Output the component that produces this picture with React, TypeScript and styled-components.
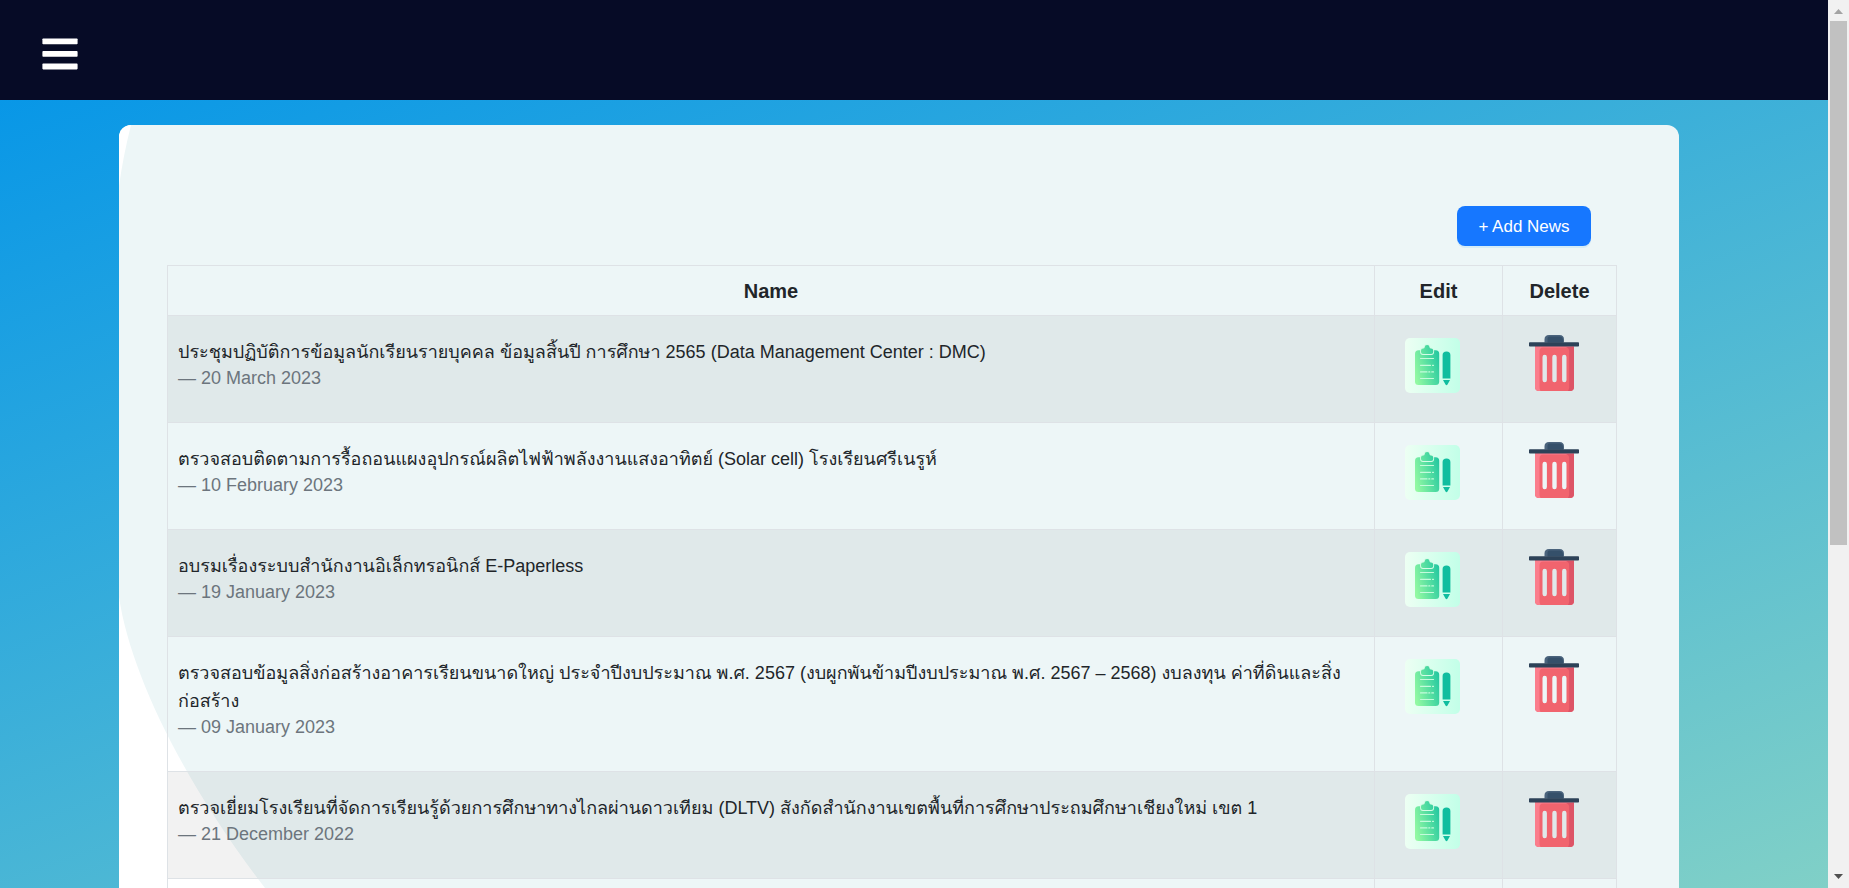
import React from "react";
import styled, { createGlobalStyle } from "styled-components";

const Global = createGlobalStyle`
  *, *::before, *::after { box-sizing: border-box; }
  html, body { margin: 0; height: 100%; }
  #root { height: 100%; }
  body {
    overflow: hidden;
    font-family: "Liberation Sans", Arial, "Loma", "Garuda", sans-serif;
    font-size: 18px;
    line-height: 28px;
    color: #212529;
  }
`;

const Screen = styled.div`
  display: grid;
  grid-template-columns: minmax(0, 1fr) 21px;
  height: 100vh;
`;

const Page = styled.div`
  height: 100vh;
  overflow: hidden;
  display: flex;
  flex-direction: column;
  background: linear-gradient(160deg, #0093e9 0%, #80d0c7 100%);
`;

const Navbar = styled.header`
  flex: none;
  display: flex;
  align-items: center;
  height: 100px;
  padding: 8px 42px 0;
  background: #060b26;
`;

const MenuButton = styled.button`
  display: flex;
  padding: 0;
  border: 0;
  background: none;
  color: #fff;
  cursor: pointer;
`;

const Card = styled.main`
  position: relative;
  flex: none;
  margin: 25px 149px 0 119px;
  padding: 81px 62px 48px 48px;
  border-radius: 12px;
  overflow: hidden;
  background: #edf6f7;
`;

const Backdrop = styled.svg`
  position: absolute;
  top: 0;
  left: 0;
`;

const Content = styled.div`
  position: relative;
`;

const Toolbar = styled.div`
  display: flex;
  justify-content: flex-end;
  padding: 0 26px 19px 0;
`;

const AddButton = styled.button`
  height: 40px;
  width: 134px;
  padding: 2px 0 0;
  border: 0;
  border-radius: 8px;
  background: #1677ff;
  box-shadow: 0 2px 0 rgba(5, 145, 255, 0.1);
  color: #fff;
  font: inherit;
  font-size: 17px;
  cursor: pointer;
`;

const NewsTable = styled.table`
  width: 100%;
  border-collapse: collapse;
  table-layout: fixed;
`;

const NameCol = styled.col``;
const EditCol = styled.col`
  width: 128px;
`;
const DeleteCol = styled.col`
  width: 114px;
`;

const HeadCell = styled.th`
  height: 50px;
  padding: 0;
  border: 1px solid #dee2e6;
  font-size: 20px;
  font-weight: 700;
  text-align: center;
`;

const Row = styled.tr`
  &:nth-child(odd) {
    background: rgba(0, 0, 0, 0.05);
  }
`;

const Cell = styled.td`
  height: 107px;
  padding: 22px 10px 32px;
  border: 1px solid #dee2e6;
  vertical-align: top;
`;

const EditCell = styled(Cell)`
  padding: 22px 0 0 30px;
`;

const DeleteCell = styled(Cell)`
  padding: 19px 0 0 26px;
`;

const Title = styled.div`
  line-height: 28px;
`;

const DateLine = styled.div`
  line-height: 24px;
  color: #6c757d;
`;

const IconButton = styled.button`
  display: block;
  padding: 0;
  border: 0;
  background: none;
  cursor: pointer;

  svg {
    display: block;
  }
`;

const Scrollbar = styled.div`
  display: flex;
  flex-direction: column;
  align-items: center;
  background: #f1f1f1;
`;

const Arrow = styled.svg`
  flex: none;
  display: block;
`;

const Thumb = styled.div`
  width: 17px;
  height: 59%;
  margin-bottom: auto;
  background: #c1c1c1;
`;

const MenuIcon = () => (
  <svg width="36" height="32" viewBox="0 0 36 32" fill="currentColor" aria-hidden="true">
    <rect x="0.4" y="0.4" width="35.2" height="5.8" rx="0.8" />
    <rect x="0.4" y="13.1" width="35.2" height="5.6" rx="0.8" />
    <rect x="0.4" y="25.6" width="35.2" height="5.8" rx="0.8" />
  </svg>
);

const EditIcon = ({ id }: { id: string }) => (
  <svg width="55" height="55" viewBox="0 0 55 55" aria-hidden="true">
    <defs>
      <linearGradient id={`${id}-bg`} x1="0" x2="1">
        <stop offset="0" stopColor="#edfff3" />
        <stop offset="1" stopColor="#c2ffe8" />
      </linearGradient>
      <linearGradient id={`${id}-fg`} gradientUnits="userSpaceOnUse" x1="10" y1="36" x2="42" y2="28">
        <stop offset="0" stopColor="#92f9a2" />
        <stop offset="1" stopColor="#10bfa0" />
      </linearGradient>
    </defs>
    <rect width="55" height="55" rx="5" fill={`url(#${id}-bg)`} />
    <rect x="10" y="12.300" width="24.200" height="34.700" rx="3.500" fill={`url(#${id}-fg)`} />
    <path
      d="M16 12.500q0-2 2.200-2 1.300 0 1.500-1.200a2.400 2.400 0 0 1 4.800 0q.2 1.200 1.500 1.200 2.200 0 2.200 2v1.500q0 2-2 2h-8.200q-2 0-2-2z"
      fill={`url(#${id}-fg)`}
      stroke="#d5fce6"
      strokeWidth="1.800"
      paintOrder="stroke"
    />
    <path d="M37.600 17q0-3.600 3.900-3.600t3.900 3.600v23.600h-7.800zM38 42h7l-2.500 4.500q-1 1.400-2 0z" fill="#10bd9f" />
    <path
      d="M15.500 20.500h13M15.500 27.300h10M27.500 27.300h1M15.500 33.900h6.500M23.800 33.900h1M26.800 33.900h1.700M15.500 40.500h13"
      stroke="#c4fbdc"
      strokeWidth="1.200"
      strokeLinecap="round"
      fill="none"
    />
  </svg>
);

const TrashIcon = () => (
  <svg width="50" height="56" viewBox="0 0 50 56" aria-hidden="true">
    <path d="M15.500 7.500V4.500q0-4.500 4.500-4.500h10.500q4.500 0 4.500 4.500v3z" fill="#4a637c" />
    <path d="M18.500 7.500V3.500q0-2 2-2h10.500q3 .5 3 4v2z" fill="#35506a" />
    <path
      fillRule="evenodd"
      fill="#f1646e"
      d="M6 11h39v41q0 4-4 4H10q-4 0-4-4zM13.500 22v23a2.200 2.200 0 0 0 4.400 0V22a2.200 2.200 0 0 0-4.400 0zM23.300 22v23a2.200 2.200 0 0 0 4.400 0V22a2.200 2.200 0 0 0-4.400 0zM33.100 22v23a2.200 2.200 0 0 0 4.400 0V22a2.200 2.200 0 0 0-4.400 0z"
    />
    <path d="M6 11h39v2q-2-.5-5-.5H14q-3.500 0-3.500 4v35.500q0 2.500 1 4h-1.500q-4 0-4-4z" fill="#fb7d8c" />
    <path d="M37 12h8v40q0 4-4 4h-2q1.200-2 1.200-4V16q0-3-3.200-4z" fill="#dd5466" />
    <rect y="7.200" width="50" height="4.400" rx="0.800" fill="#2d4258" />
  </svg>
);

const news = [
  { title: "ประชุมปฏิบัติการข้อมูลนักเรียนรายบุคคล ข้อมูลสิ้นปี การศึกษา 2565 (Data Management Center : DMC)", date: "20 March 2023" },
  { title: "ตรวจสอบติดตามการรื้อถอนแผงอุปกรณ์ผลิตไฟฟ้าพลังงานแสงอาทิตย์ (Solar cell) โรงเรียนศรีเนรูห์", date: "10 February 2023" },
  { title: "อบรมเรื่องระบบสำนักงานอิเล็กทรอนิกส์ E-Paperless", date: "19 January 2023" },
  { title: "ตรวจสอบข้อมูลสิ่งก่อสร้างอาคารเรียนขนาดใหญ่ ประจำปีงบประมาณ พ.ศ. 2567 (งบผูกพันข้ามปีงบประมาณ พ.ศ. 2567 – 2568) งบลงทุน ค่าที่ดินและสิ่งก่อสร้าง", date: "09 January 2023" },
  { title: "ตรวจเยี่ยมโรงเรียนที่จัดการเรียนรู้ด้วยการศึกษาทางไกลผ่านดาวเทียม (DLTV) สังกัดสำนักงานเขตพื้นที่การศึกษาประถมศึกษาเชียงใหม่ เขต 1", date: "21 December 2022" },
];

export default function App() {
  return (
    <>
      <Global />
      <Screen>
        <Page>
          <Navbar>
            <MenuButton aria-label="Open menu">
              <MenuIcon />
            </MenuButton>
          </Navbar>
          <Card>
            <Backdrop width="260" height="900" viewBox="0 0 260 900" fill="#fff" aria-hidden="true">
              <path d="M0 0H12Q4 32 0 61z" />
              <path d="M0 472C12 552 68 662 146 763Q190 820 255 900H0z" />
            </Backdrop>
            <Content>
              <Toolbar>
                <AddButton>+ Add News</AddButton>
              </Toolbar>
              <NewsTable>
                <colgroup>
                  <NameCol />
                  <EditCol />
                  <DeleteCol />
                </colgroup>
                <thead>
                  <tr>
                    <HeadCell scope="col">Name</HeadCell>
                    <HeadCell scope="col">Edit</HeadCell>
                    <HeadCell scope="col">Delete</HeadCell>
                  </tr>
                </thead>
                <tbody>
                  {news.map((item, i) => (
                    <Row key={item.date}>
                      <Cell>
                        <Title>{item.title}</Title>
                        <DateLine>— {item.date}</DateLine>
                      </Cell>
                      <EditCell>
                        <IconButton aria-label="Edit">
                          <EditIcon id={`edit-${i}`} />
                        </IconButton>
                      </EditCell>
                      <DeleteCell>
                        <IconButton aria-label="Delete">
                          <TrashIcon />
                        </IconButton>
                      </DeleteCell>
                    </Row>
                  ))}
                  <Row>
                    <Cell />
                    <EditCell />
                    <DeleteCell />
                  </Row>
                </tbody>
              </NewsTable>
            </Content>
          </Card>
        </Page>
        <Scrollbar aria-hidden="true">
          <Arrow width="21" height="21" viewBox="0 0 21 21">
            <path d="M6 14l4.500-5 4.500 5z" fill="#a3a3a3" />
          </Arrow>
          <Thumb />
          <Arrow width="21" height="21" viewBox="0 0 21 21">
            <path d="M6 7l4.500 5 4.500-5z" fill="#505050" />
          </Arrow>
        </Scrollbar>
      </Screen>
    </>
  );
}
